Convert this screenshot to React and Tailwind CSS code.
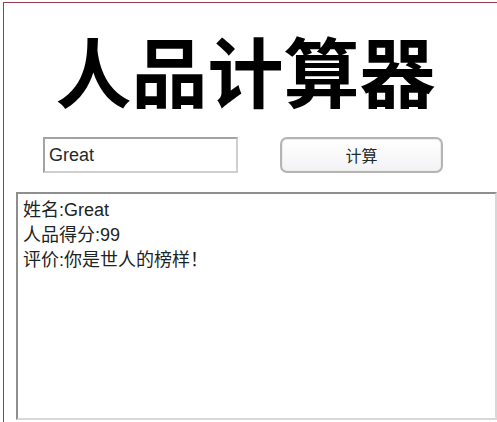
export default function App() {
  const result = ["姓名:Great", "人品得分:99", "评价:你是世人的榜样！"].join("\n")

  return (
    <div className="h-[422px] w-full overflow-hidden bg-white pl-[3px] pt-[2px]">
      <div className="flex h-[440px] flex-col border-l border-t border-[#9b3b4b]">
        <h1 className="mt-[28px] pr-[10px] text-center font-['Noto_Sans_CJK_SC','Noto_Sans',sans-serif] text-[76px] font-bold leading-none text-black">
          人品计算器
        </h1>

        <div className="mt-[30px] flex items-center gap-[42px] pl-[39px]">
          <input
            type="text"
            defaultValue="Great"
            className="h-[36px] w-[195px] border-2 border-b-[#cfcfcf] border-l-[#a3a3a3] border-r-[#cfcfcf] border-t-[#a3a3a3] bg-white px-[4px] font-['Liberation_Sans',Arial,sans-serif] text-[18px] text-[#1c2b2b] outline-none"
          />
          <button
            type="button"
            className="h-[36px] w-[163px] rounded-[7px] border-2 border-[#b4b4b4] bg-gradient-to-b from-white to-[#f3f3f6] font-['Noto_Sans_CJK_SC',sans-serif] text-[16px] text-[#1c2b2b] shadow-[inset_0_0_0_1px_#ececec]"
          >
            计算
          </button>
        </div>

        <textarea
          readOnly
          value={result}
          className="ml-[12px] mt-[19px] h-[228px] resize-none border-2 border-b-[#d8d8d8] border-l-[#8e8e8e] border-r-[#d8d8d8] border-t-[#8e8e8e] bg-white pl-[5px] pt-[4px] font-['Liberation_Sans','Noto_Sans_CJK_SC',sans-serif] text-[18px] leading-[25px] text-[#1c2424] outline-none"
        />
      </div>
    </div>
  )
}
